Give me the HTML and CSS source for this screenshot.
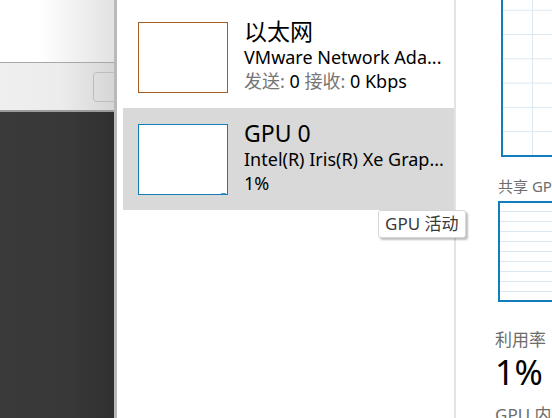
FILE: index.html
```html
<!doctype html>
<html>
<head>
    <meta charset="utf-8"/>
    <title>任务管理器 - 性能</title>
    <link rel="stylesheet" href="styles.css">
</head>
<body>
<div class="screen">
    <div class="back-window">
        <div class="back-top"></div>
        <div class="back-toolbar">
            <span class="back-button"></span>
        </div>
        <div class="back-content"></div>
    </div>

    <div class="taskmgr">
        <div class="side-list">
            <div class="item">
                <div class="thumb thumb-net"></div>
                <div class="info">
                    <div class="title">以太网</div>
                    <div class="line">VMware Network Ada...</div>
                    <div class="line"><span class="muted">发送:</span> 0 <span class="muted">接收:</span> 0 Kbps</div>
                </div>
            </div>
            <div class="item selected">
                <div class="thumb thumb-gpu"><span class="blip"></span></div>
                <div class="info">
                    <div class="title">GPU 0</div>
                    <div class="line">Intel(R) Iris(R) Xe Grap...</div>
                    <div class="line">1%</div>
                </div>
            </div>
            <div class="tooltip">GPU 活动</div>
        </div>

        <div class="detail">
            <div class="graph graph-main"></div>
            <div class="label label-shared">共享 GPU 内存</div>
            <div class="graph graph-shared"></div>
            <div class="stat">
                <div class="label">利用率</div>
                <div class="big">1%</div>
            </div>
            <div class="label label-mem">GPU 内存</div>
        </div>
    </div>
</div>
</body>
</html>
```

FILE: styles.css
```css
html, body {
margin: 0;
padding: 0;
}
body {
background: #fff;
font-family: "Noto Sans", "Noto Sans CJK SC", sans-serif;
color: #000;
}
.screen {
display: flex;
width: 552px;
height: 418px;
overflow: hidden;
}

/* window behind task manager */
.back-window {
width: 114px;
flex: none;
display: flex;
flex-direction: column;
border-right: 3px solid #b9b9b9;
}
.back-top {
height: 62px;
background: linear-gradient(to right, #fff 0, #fff 40px, #e2e2e2 114px);
border-bottom: 1px solid #a8a8a8;
}
.back-toolbar {
height: 38px;
padding: 9px 0 0 93px;
background: linear-gradient(to right, #efefef 0, #ececec 60px, #d6d6d6 114px);
border-bottom: 2px solid #9c9c9c;
}
.back-button {
display: block;
width: 30px;
height: 28px;
border: 1px solid #bdbdbd;
border-radius: 4px;
}
.back-content {
flex: 1;
background: linear-gradient(to right, #3a3a3a 0, #383838 70px, #303030 114px);
}

/* task manager */
.taskmgr {
flex: 1;
display: flex;
background: #fff;
}
.side-list {
position: relative;
width: 331px;
padding: 6px 0 0 6px;
border-right: 2px solid #e3e3e3;
}
.item {
display: flex;
height: 102px;
padding: 16px 0 0 15px;
box-sizing: border-box;
}
.item.selected {
background: #d9d9d9;
}
.thumb {
position: relative;
width: 88px;
height: 69px;
background: #fff;
flex: none;
}
.thumb-net {
border: 1px solid #a75d1f;
}
.thumb-gpu {
border: 1px solid #117dbb;
}
.blip {
position: absolute;
right: 1px;
bottom: 0;
width: 5px;
height: 1px;
background: #5a9fd0;
}
.info {
margin-left: 16px;
margin-top: -5px;
white-space: nowrap;
}
.title {
font-size: 23px;
line-height: 28px;
}
.line {
font-size: 18px;
line-height: 24px;
}
.muted {
color: #767676;
}
.tooltip {
position: absolute;
left: 261px;
top: 210px;
padding: 2px 6px 2px 6px;
font-size: 17px;
line-height: 22px;
white-space: nowrap;
color: #3a3a3a;
background: #fff;
border: 1px solid #d6d6d6;
border-radius: 3px;
box-shadow: 2px 2px 2px rgba(0, 0, 0, 0.25);
}

/* right pane */
.detail {
flex: 1;
padding-left: 42px;
overflow: hidden;
}
.graph {
background-color: #fff;
border: 2px solid #117dbb;
border-right: none;
}
.graph-main {
margin-left: 3px;
height: 155px;
border-top: none;
background-image:
  linear-gradient(to right, transparent 29px, #dbe8f1 29px, #dbe8f1 30px, transparent 30px),
  linear-gradient(to bottom, transparent 10px, #dbe8f1 10px, #dbe8f1 11px, transparent 11px);
background-size: 100% 100%, 100% 24.3px;
}
.label {
color: #6d6d6d;
font-size: 15px;
line-height: 20px;
white-space: nowrap;
}
.label-shared {
margin-top: 19px;
}
.graph-shared {
margin-top: 5px;
height: 97px;
background-image: linear-gradient(to bottom, transparent 8px, #dbe8f1 8px, #dbe8f1 9px, transparent 9px);
background-size: 100% 10px;
}
.stat {
margin: 28px 0 0 -3px;
}
.stat .label {
font-size: 17px;
line-height: 20px;
}
.big {
font-size: 34px;
line-height: 46px;
margin-top: -1px;
}
.label-mem {
margin: 10px 0 0 -3px;
font-size: 17px;
}
```
